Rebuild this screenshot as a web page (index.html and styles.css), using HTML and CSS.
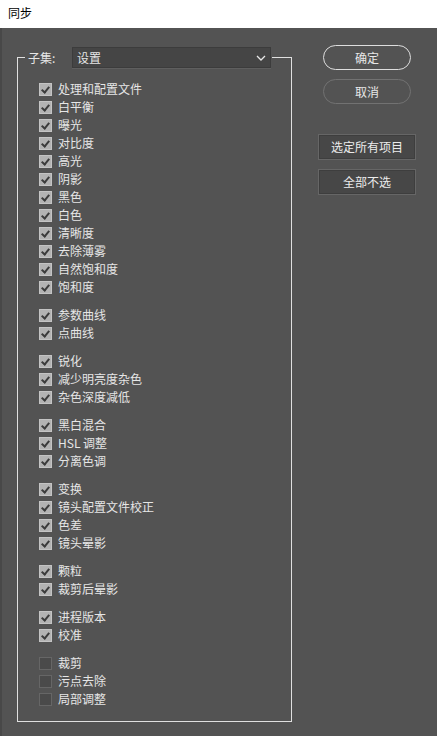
FILE: index.html
```html
<!DOCTYPE html>
<html lang="zh">
<head>
<meta charset="utf-8">
<title>同步</title>
<link rel="stylesheet" href="styles.css">
</head>
<body>
<div class="titlebar">同步</div>
<div class="dialog">
  <fieldset class="group">
    <legend class="legend">
      <span class="legend-label">子集:</span>
      <span class="select">
        <span class="select-text">设置</span>
        <svg class="chev" width="10" height="6" viewBox="0 0 10 6"><path d="M1 1 L5 5 L9 1" fill="none" stroke="#e8e8e8" stroke-width="1.3"/></svg>
      </span>
    </legend>
    <div class="list">
      <div class="sect">
        <div class="row"><span class="cb on"></span><span>处理和配置文件</span></div>
        <div class="row"><span class="cb on"></span><span>白平衡</span></div>
        <div class="row"><span class="cb on"></span><span>曝光</span></div>
        <div class="row"><span class="cb on"></span><span>对比度</span></div>
        <div class="row"><span class="cb on"></span><span>高光</span></div>
        <div class="row"><span class="cb on"></span><span>阴影</span></div>
        <div class="row"><span class="cb on"></span><span>黑色</span></div>
        <div class="row"><span class="cb on"></span><span>白色</span></div>
        <div class="row"><span class="cb on"></span><span>清晰度</span></div>
        <div class="row"><span class="cb on"></span><span>去除薄雾</span></div>
        <div class="row"><span class="cb on"></span><span>自然饱和度</span></div>
        <div class="row"><span class="cb on"></span><span>饱和度</span></div>
      </div>
      <div class="sect">
        <div class="row"><span class="cb on"></span><span>参数曲线</span></div>
        <div class="row"><span class="cb on"></span><span>点曲线</span></div>
      </div>
      <div class="sect">
        <div class="row"><span class="cb on"></span><span>锐化</span></div>
        <div class="row"><span class="cb on"></span><span>减少明亮度杂色</span></div>
        <div class="row"><span class="cb on"></span><span>杂色深度减低</span></div>
      </div>
      <div class="sect">
        <div class="row"><span class="cb on"></span><span>黑白混合</span></div>
        <div class="row"><span class="cb on"></span><span>HSL 调整</span></div>
        <div class="row"><span class="cb on"></span><span>分离色调</span></div>
      </div>
      <div class="sect">
        <div class="row"><span class="cb on"></span><span>变换</span></div>
        <div class="row"><span class="cb on"></span><span>镜头配置文件校正</span></div>
        <div class="row"><span class="cb on"></span><span>色差</span></div>
        <div class="row"><span class="cb on"></span><span>镜头晕影</span></div>
      </div>
      <div class="sect">
        <div class="row"><span class="cb on"></span><span>颗粒</span></div>
        <div class="row"><span class="cb on"></span><span>裁剪后晕影</span></div>
      </div>
      <div class="sect">
        <div class="row"><span class="cb on"></span><span>进程版本</span></div>
        <div class="row"><span class="cb on"></span><span>校准</span></div>
      </div>
      <div class="sect">
        <div class="row"><span class="cb"></span><span>裁剪</span></div>
        <div class="row"><span class="cb"></span><span>污点去除</span></div>
        <div class="row"><span class="cb"></span><span>局部调整</span></div>
      </div>
    </div>
  </fieldset>
  <div class="buttons">
    <div class="pill primary">确定</div>
    <div class="pill">取消</div>
    <div class="rect first">选定所有项目</div>
    <div class="rect">全部不选</div>
  </div>
</div>
</body>
</html>
```
FILE: styles.css
```css
html, body {
  margin: 0;
  padding: 0;
  width: 437px;
  height: 736px;
  overflow: hidden;
  background: #535353;
  font-family: "Noto Sans CJK SC", "Noto Sans", sans-serif;
  font-size: 12px;
}
.titlebar {
  height: 28px;
  line-height: 26px;
  background: #ffffff;
  color: #000;
  padding-left: 8px;
  box-sizing: border-box;
}
.dialog {
  height: 708px;
  display: flex;
  align-items: flex-start;
  border-left: 2px solid #484848;
  box-sizing: border-box;
  color: #e6e6e6;
}
.group {
  margin: 19px 0 0 15px;
  padding: 0 0 13px 0;
  width: 275px;
  box-sizing: border-box;
  border: 1px solid #e0e0e0;
  min-width: 0;
}
.legend {
  margin-left: 7px;
  padding: 0 1px 0 3px;
  display: flex;
  align-items: center;
  height: 21px;
}
.legend-label {
  width: 44px;
  line-height: 21px;
}
.select {
  width: 199px;
  height: 21px;
  box-sizing: border-box;
  background: #454545;
  border: 1px solid #3c3c3c;
  box-shadow: 0 1px 0 #5f5f5f;
  display: flex;
  align-items: center;
  justify-content: space-between;
  padding: 0 4px 0 4px;
}
.select-text {
  line-height: 19px;
}
.chev {
  display: block;
}
.list {
  padding: 12px 0 0 21px;
  display: flex;
  flex-direction: column;
  gap: 10px;
}
.row {
  height: 18px;
  display: flex;
  align-items: center;
  gap: 6px;
  line-height: 18px;
  white-space: nowrap;
}
.cb {
  width: 13px;
  height: 13px;
  box-sizing: border-box;
  border: 1px solid #666666;
  background: #4a4a4a;
  flex: none;
  position: relative;
}
.cb.on {
  border-color: #c4c4c4;
  background: #b3b3b3;
}
.cb.on::after {
  content: "";
  position: absolute;
  left: 3px;
  top: 1px;
  width: 3px;
  height: 6px;
  border-right: 2px solid #3c3c3c;
  border-bottom: 2px solid #3c3c3c;
  transform: rotate(40deg);
}
.buttons {
  margin: 17px 0 0 26px;
  width: 98px;
  display: flex;
  flex-direction: column;
  align-items: center;
  gap: 9px;
}
.pill {
  width: 88px;
  height: 25px;
  box-sizing: border-box;
  border: 1px solid #727272;
  border-radius: 13px;
  text-align: center;
  line-height: 23px;
  color: #e8e8e8;
}
.pill.primary {
  border: 1.5px solid #dedede;
}
.rect {
  width: 98px;
  height: 26px;
  box-sizing: border-box;
  border: 1px solid #666666;
  background: #474747;
  box-shadow: inset 0 0 0 1px #3e3e3e;
  text-align: center;
  line-height: 24px;
  color: #ececec;
}
.rect.first {
  margin-top: 21px;
}
```
